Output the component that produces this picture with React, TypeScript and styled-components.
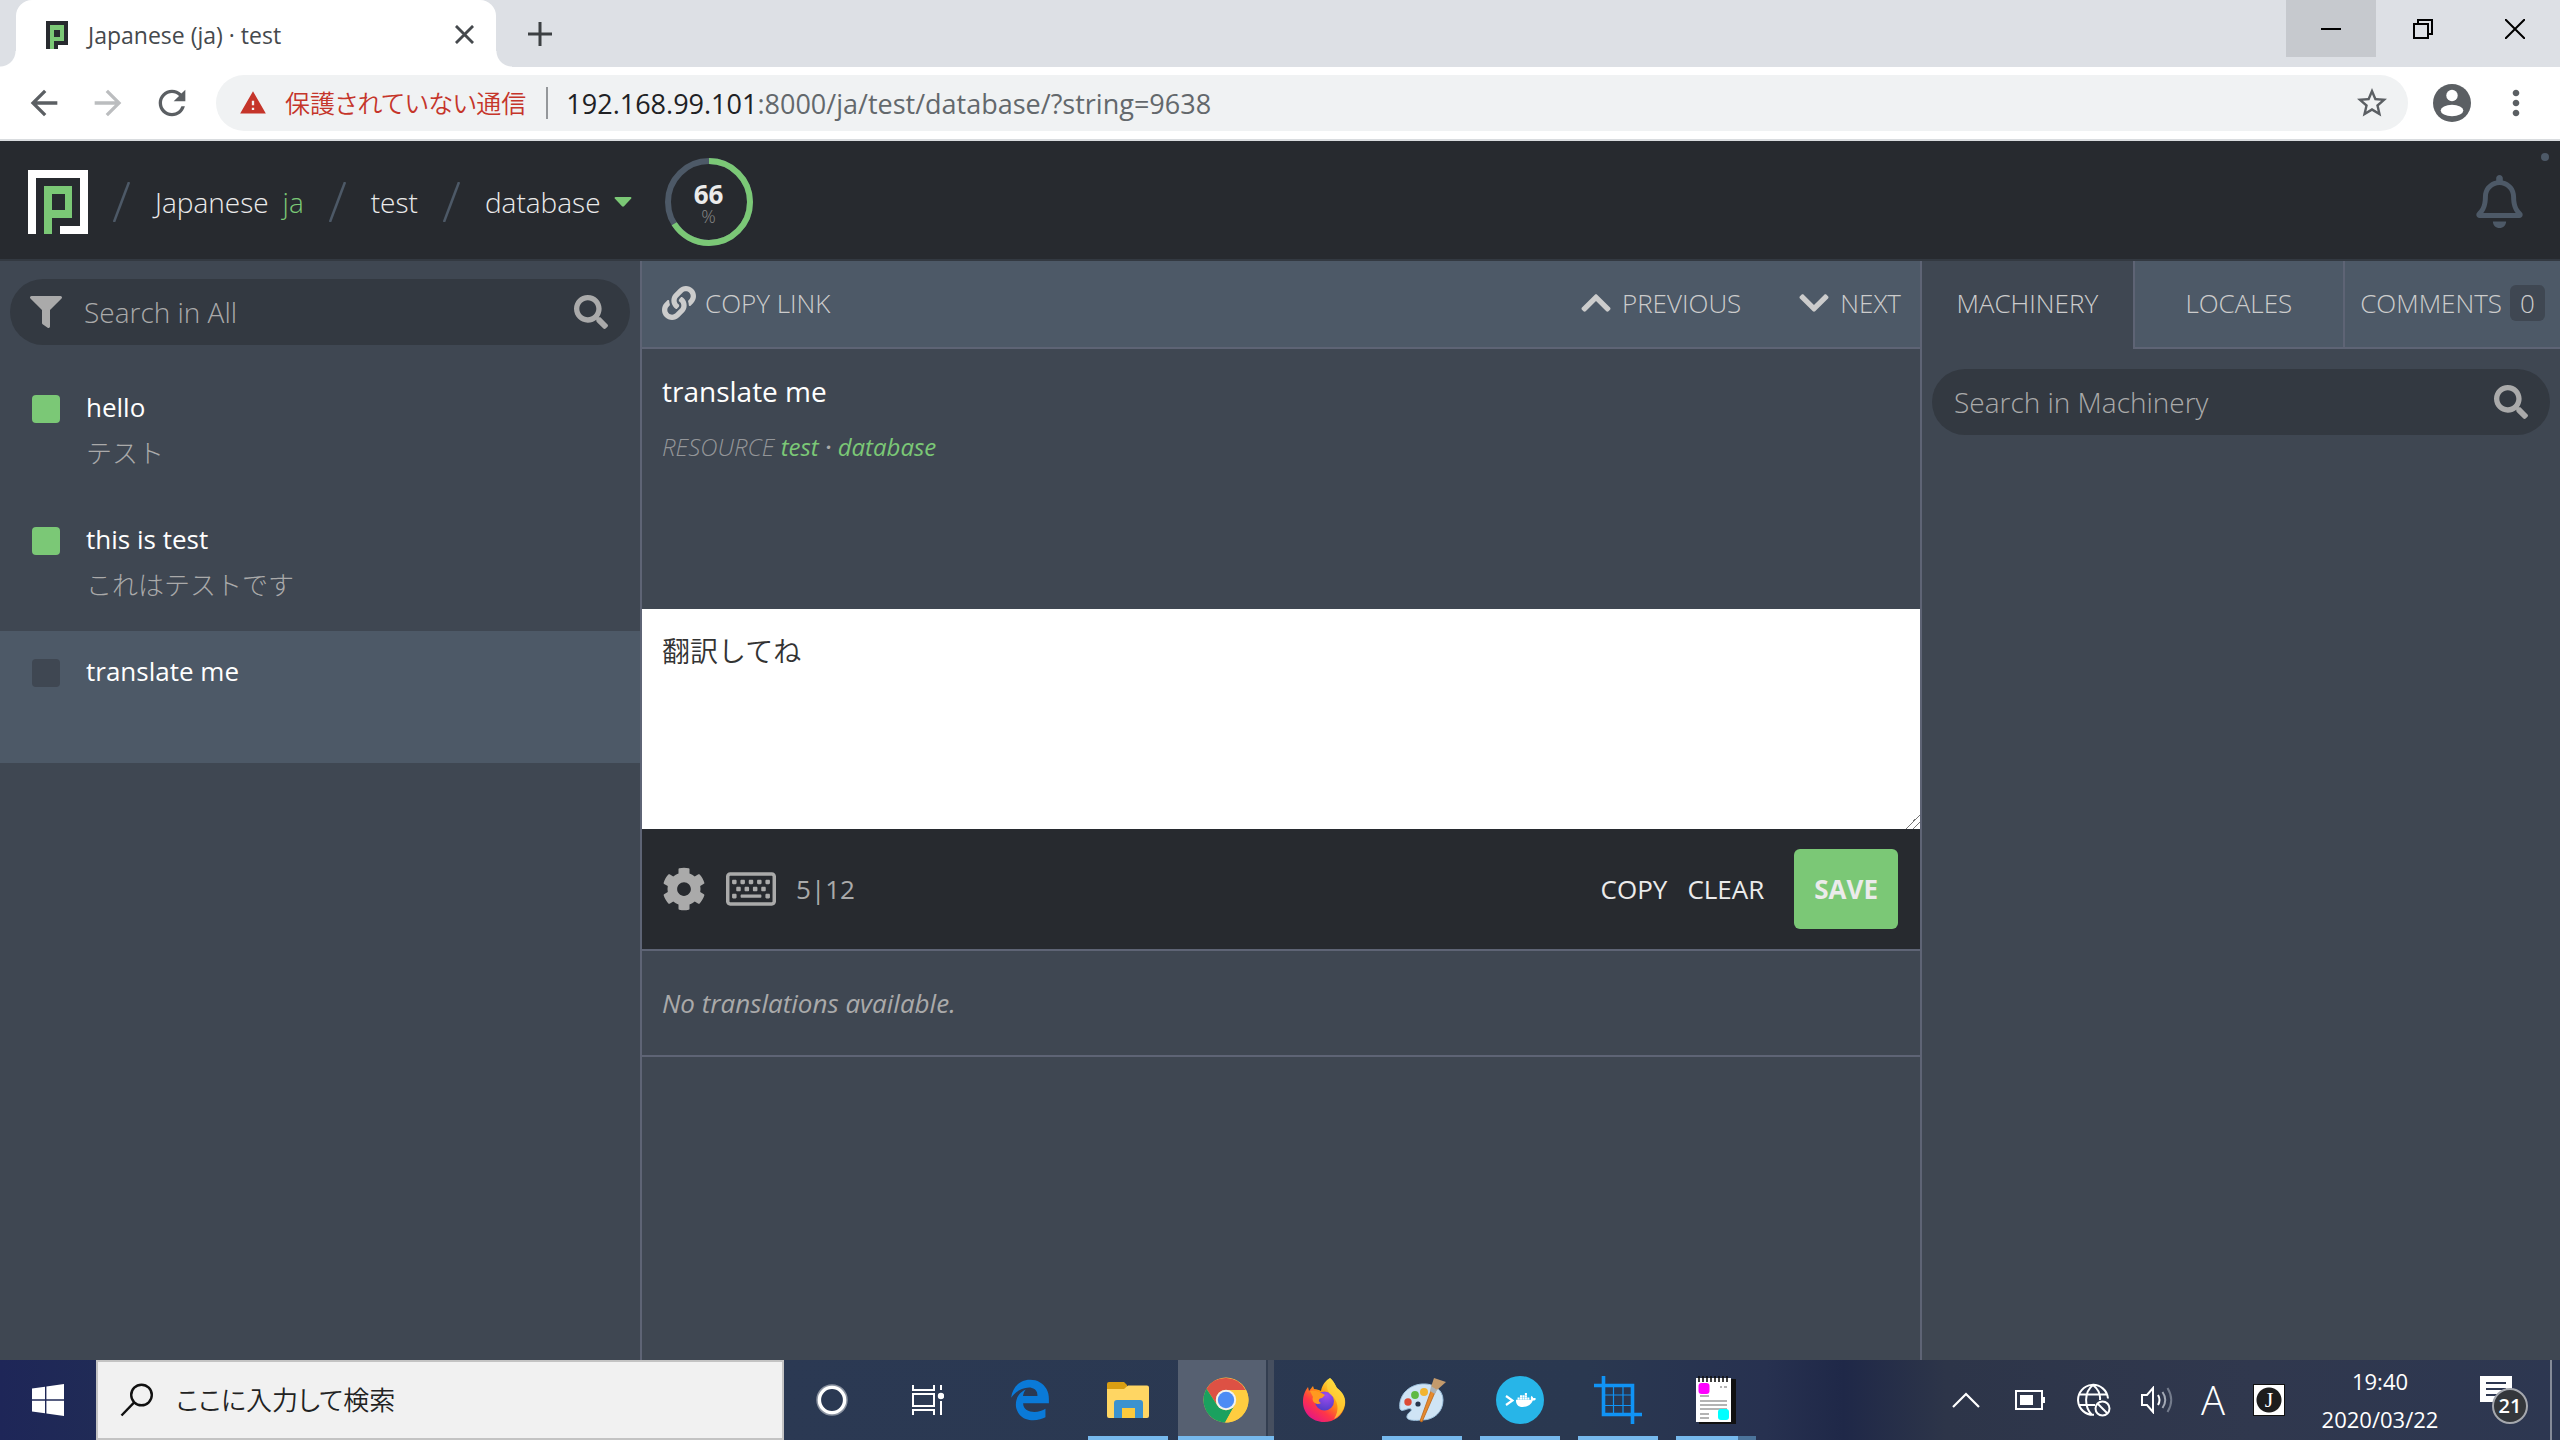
import React, { useState } from "react";
import styled, { createGlobalStyle, css } from "styled-components";
import {
  FaChevronDown,
  FaChevronUp,
  FaCog,
  FaDocker,
  FaFilter,
  FaLink,
  FaRegBell,
  FaRegKeyboard,
  FaSearch,
} from "react-icons/fa";
import { FaEdgeLegacy } from "react-icons/fa6";
import { MdArrowBack, MdArrowForward, MdMoreVert, MdRefresh, MdStarBorder, MdWarning } from "react-icons/md";

const colors = {
  black: "#272a2f",
  field: "#333941",
  base: "#3f4752",
  raised: "#4d5967",
  line: "#5e6475",
  green: "#7bc876",
  grey: "#aaaaaa",
  light: "#cccccc",
  bright: "#ebebeb",
};

const GlobalStyle = createGlobalStyle`
  *, *::before, *::after { box-sizing: border-box; }
  body {
    margin: 0;
    font-family: "Open Sans", "Noto Sans CJK JP", sans-serif;
    font-size: 26px;
    color: ${colors.bright};
    background: ${colors.base};
  }
  button, input, textarea { font: inherit; color: inherit; }
  button { padding: 0; border: 0; background: none; cursor: pointer; }
  a { text-decoration: none; color: inherit; }
  svg { display: block; flex: none; }
  h1, p, ul, nav { margin: 0; padding: 0; font: inherit; }
  ul { list-style: none; }
`;

const Screen = styled.div`
  display: flex;
  flex-direction: column;
  min-height: 100vh;
`;

/* Browser window */

const TabStrip = styled.div`
  display: flex;
  height: 67px;
  padding-left: 16px;
  background: #dde0e5;
`;

const flare = css`
  content: "";
  position: absolute;
  bottom: 0;
  width: 16px;
  height: 16px;
`;

const BrowserTab = styled.div`
  position: relative;
  display: flex;
  align-items: center;
  gap: 20px;
  width: 480px;
  padding: 2px 22px 0 30px;
  border-radius: 16px 16px 0 0;
  background: #fff;
  color: #45494d;
  font-size: 23px;
  &::before { ${flare} left: -16px; background: radial-gradient(circle at 0 0, transparent 15px, #fff 16px); }
  &::after { ${flare} right: -16px; background: radial-gradient(circle at 100% 0, transparent 15px, #fff 16px); }
`;

const TabTitle = styled.span`
  flex: 1;
`;

const NewTab = styled.button`
  display: grid;
  place-items: center;
  width: 48px;
  margin-left: 20px;
`;

const WindowButtons = styled.div`
  display: flex;
  gap: 2px;
  margin-left: auto;
`;

const WindowButton = styled.button<{ $hover?: boolean }>`
  display: grid;
  place-items: center;
  width: 90px;
  height: 57px;
  background: ${(p) => (p.$hover ? "#c6c9ce" : "transparent")};
`;

const AddressRow = styled.div`
  display: flex;
  align-items: center;
  gap: 24px;
  height: 74px;
  padding: 0 24px;
  border-bottom: 2px solid #d9dcdf;
  background: #fff;
`;

const ToolButton = styled.button<{ $dim?: boolean }>`
  display: grid;
  place-items: center;
  width: 40px;
  height: 56px;
  color: ${(p) => (p.$dim ? "#bbbdbf" : "#5b5f63")};
`;

const Omnibox = styled.div`
  display: flex;
  align-items: center;
  flex: 1;
  height: 56px;
  padding: 0 16px 0 23px;
  border-radius: 28px;
  background: #f0f2f3;
  font-size: 27px;
`;

const Insecure = styled.button`
  display: flex;
  align-items: center;
  gap: 18px;
  padding-right: 20px;
  border-right: 2px solid #94979a;
  color: #c5352a;
  font-size: 25px;
  font-weight: 350;
  font-feature-settings: "palt";
  line-height: 32px;
`;

const Url = styled.span`
  flex: 1;
  padding-left: 18px;
  color: #63686c;
`;

const Host = styled.span`
  color: #202124;
`;

/* Page header */

const Header = styled.header`
  position: relative;
  display: flex;
  align-items: center;
  height: 120px;
  padding: 3px 34px 0 28px;
  border-bottom: 2px solid ${colors.field};
  background: ${colors.black};
  font-size: 28px;
  font-weight: 300;
`;

const Crumbs = styled.nav`
  display: flex;
  align-items: center;
  gap: 25px;
`;

const Crumb = styled.a`
  display: flex;
  gap: 14px;
`;

const LocaleCode = styled.span`
  color: ${colors.green};
`;

const ResourceButton = styled.button`
  display: flex;
  align-items: center;
  gap: 13px;
`;

const Progress = styled.div`
  display: grid;
  width: 88px;
  height: 88px;
  margin-left: 33px;
  > * { grid-area: 1 / 1; }
`;

const ProgressText = styled.div`
  display: flex;
  flex-direction: column;
  align-items: center;
  padding-top: 24px;
  font-size: 26px;
  font-weight: 700;
  line-height: 24px;
`;

const Percent = styled.span`
  color: #888;
  font-size: 18px;
  font-weight: 300;
  line-height: 20px;
`;

const BellButton = styled.button`
  margin-left: auto;
  color: ${colors.raised};
`;

const ScrollDot = styled.span`
  position: absolute;
  top: 12px;
  right: 11px;
  width: 8px;
  height: 8px;
  border-radius: 4px;
  background: ${colors.raised};
`;

/* Workspace */

const Workspace = styled.main`
  display: grid;
  grid-template-columns: minmax(0, 1fr) minmax(0, 2fr) minmax(0, 1fr);
  flex: 1;
  background: ${colors.base};
`;

const Column = styled.section<{ $line?: boolean }>`
  display: flex;
  flex-direction: column;
  border-left: ${(p) => (p.$line ? `2px solid ${colors.line}` : "0")};
`;

const SearchBox = styled.label<{ $top: number }>`
  display: flex;
  align-items: center;
  gap: 20px;
  height: 66px;
  margin: ${(p) => p.$top}px 10px 22px;
  padding: 0 22px 0 20px;
  border-radius: 33px;
  background: ${colors.field};
  color: ${colors.grey};
`;

const SearchInput = styled.input`
  flex: 1;
  min-width: 0;
  padding: 0 2px;
  border: 0;
  outline: 0;
  background: none;
  font-size: 28px;
  font-weight: 300;
  &::placeholder { color: ${colors.grey}; opacity: 1; }
`;

const Entity = styled.button<{ $selected?: boolean }>`
  display: flex;
  gap: 26px;
  width: 100%;
  height: 132px;
  padding: 17px 32px 0;
  background: ${(p) => (p.$selected ? colors.raised : "transparent")};
  line-height: 46px;
  text-align: left;
`;

const Status = styled.span<{ $done: boolean }>`
  width: 28px;
  height: 28px;
  margin-top: 11px;
  border-radius: 4px;
  background: ${(p) => (p.$done ? colors.green : colors.base)};
`;

const EntityText = styled.span`
  display: flex;
  flex-direction: column;
  color: #fff;
`;

const EntityTranslation = styled.span`
  color: ${colors.grey};
  font-weight: 300;
`;

const Toolbar = styled.div`
  display: flex;
  align-items: center;
  gap: 56px;
  height: 88px;
  padding: 0 19px 2px 20px;
  border-bottom: 2px solid ${colors.line};
  background: ${colors.raised};
`;

const ToolbarButton = styled.button<{ $push?: boolean }>`
  display: flex;
  align-items: center;
  gap: 9px;
  margin-right: ${(p) => (p.$push ? "auto" : "0")};
  color: ${colors.light};
  font-weight: 300;
`;

const Source = styled.div`
  min-height: 260px;
  padding: 19px 20px;
`;

const Original = styled.h1`
  color: #fff;
  font-size: 28px;
  line-height: 46px;
`;

const Context = styled.p`
  padding-top: 15px;
  color: #949699;
  font-size: 24px;
  font-style: italic;
  font-weight: 300;
  line-height: 36px;
`;

const ContextLink = styled.a`
  color: ${colors.green};
  font-weight: 400;
`;

const Separator = styled.span`
  color: ${colors.grey};
  font-weight: 600;
`;

const Translation = styled.textarea`
  display: block;
  width: 100%;
  height: 220px;
  padding: 20px;
  border: 0;
  outline: 0;
  background: #fff;
  color: #333;
  font-size: 28px;
  font-weight: 350;
  line-height: 44px;
  resize: vertical;
  &::-webkit-scrollbar { width: 18px; height: 18px; }
  &::-webkit-resizer {
    background: linear-gradient(135deg, #fff 50%, #777 50%, #777 54%, #fff 54%, #fff 75%, #777 75%, #777 79%, #fff 79%);
  }
`;

const EditorBar = styled.div`
  display: flex;
  align-items: center;
  gap: 20px;
  height: 120px;
  padding: 0 22px 0 20px;
  background: ${colors.black};
`;

const IconButton = styled.button`
  color: ${colors.grey};
`;

const Counter = styled.span`
  flex: 1;
  color: ${colors.grey};
`;

const Save = styled.button`
  height: 80px;
  margin-left: 10px;
  padding: 0 20px;
  border-radius: 6px;
  background: ${colors.green};
  font-weight: 700;
`;

const History = styled.p`
  padding: 31px 20px;
  border: solid ${colors.line};
  border-width: 2px 0;
  color: ${colors.grey};
  font-style: italic;
  line-height: 42px;
`;

const Tabs = styled.div`
  display: grid;
  grid-template-columns: 33fr 33fr 34fr;
  height: 88px;
`;

const Tab = styled.button<{ $active?: boolean }>`
  display: flex;
  align-items: center;
  justify-content: center;
  gap: 8px;
  padding-bottom: 2px;
  border-left: ${(p) => (p.$active ? "0" : `2px solid ${colors.line}`)};
  border-bottom: 2px solid ${(p) => (p.$active ? "transparent" : colors.line)};
  background: ${(p) => (p.$active ? "transparent" : colors.raised)};
  color: ${colors.light};
  font-weight: 300;
`;

const Count = styled.span`
  padding: 0 10px;
  border-radius: 6px;
  background: ${colors.base};
  line-height: 36px;
`;

/* Taskbar */

const Taskbar = styled.footer`
  display: flex;
  height: 80px;
  background: linear-gradient(90deg, #1e2658 0, #202b56 4%, #2b3953 30%, #2a3850 62%, #273150 69%, #1f2848 72%, #2d3549 76%, #30384e 88%, #2d3751 100%);
  color: #fff;
`;

const StartButton = styled.button`
  display: grid;
  place-items: center;
  width: 96px;
`;

const TaskSearch = styled.label`
  display: flex;
  align-items: center;
  gap: 20px;
  width: 688px;
  padding-left: 22px;
  border: 2px solid #c3c3c3;
  background: #f1f1f1;
  color: #111;
`;

const TaskSearchInput = styled.input`
  flex: 1;
  border: 0;
  outline: 0;
  background: none;
  font-feature-settings: "palt";
  font-weight: 350;
  &::placeholder { color: #222; opacity: 1; }
`;

const ShellButtons = styled.div`
  display: flex;
  margin-right: 6px;
`;

const Apps = styled.div`
  display: flex;
  gap: 2px;
`;

const TaskButton = styled.button<{ $run?: boolean; $active?: boolean; $stack?: boolean }>`
  position: relative;
  display: grid;
  place-items: center;
  width: 96px;
  background: ${(p) => (p.$active ? "linear-gradient(90deg, #566071 88px, #333e50 88px, #333e50 90px, #464f5f 90px)" : "none")};
  &::after {
    content: "";
    position: absolute;
    bottom: 0;
    left: ${(p) => (p.$active ? "0" : "8px")};
    right: ${(p) => (p.$active ? "0" : "8px")};
    height: 4px;
    background: ${(p) =>
      p.$stack
        ? "linear-gradient(90deg, #76b9ed 62px, #4c749b 62px)"
        : p.$run || p.$active
          ? "#76b9ed"
          : "none"};
  }
`;

const Tray = styled.div`
  display: flex;
  margin-left: auto;
`;

const TrayButton = styled.button<{ $w: number }>`
  display: grid;
  place-items: center;
  width: ${(p) => p.$w}px;
`;

const ImeMode = styled.span`
  font-size: 40px;
  font-weight: 300;
  line-height: 48px;
`;

const ImeBadge = styled.span`
  display: grid;
  place-items: center;
  width: 32px;
  height: 32px;
  border: 1px solid #111;
  background: radial-gradient(circle, #1d1d1d 12px, #fff 13px);
  font: 22px/28px "Liberation Serif", serif;
`;

const Clock = styled.time`
  display: flex;
  flex-direction: column;
  justify-content: center;
  width: 156px;
  font-size: 22px;
  line-height: 38px;
  text-align: center;
`;

const NoticeButton = styled.button`
  display: grid;
  place-items: center;
  width: 92px;
`;

const NoticeIcon = styled.span`
  position: relative;
  display: block;
  width: 48px;
  height: 48px;
`;

const NoticeCount = styled.span`
  position: absolute;
  right: 0;
  bottom: 0;
  width: 36px;
  height: 36px;
  border: 2px solid #a5a8ae;
  border-radius: 18px;
  background: #34373b;
  font-size: 20px;
  font-weight: 600;
  line-height: 31px;
`;

const ShowDesktop = styled.button`
  width: 10px;
  border-left: 2px solid #858b98;
`;

/* Drawings */

const Favicon = () => (
  <svg width="22" height="28" viewBox="0 0 22 28">
    <path d="M0 0H22V24H12V28H0Z" fill="#272a2f" />
    <path fillRule="evenodd" d="M4 4H18V20H8V28H4ZM8 9V16H14V9Z" fill="#7bc876" />
  </svg>
);

const Logo = () => (
  <svg width="60" height="64" viewBox="0 0 60 64">
    <path d="M0 0H60V64H32V56H52V8H8V64H0Z" fill="#fff" />
    <path fillRule="evenodd" d="M16 16H44V48H24V64H16ZM24 24V40H37V24Z" fill="#7bc876" />
  </svg>
);

const Slash = () => (
  <svg width="17" height="40" viewBox="0 0 17 40">
    <path d="M1 40L16 0" stroke="#4d5967" strokeWidth="2.5" />
  </svg>
);

const Caret = () => (
  <svg width="18" height="10" viewBox="0 0 18 10">
    <path d="M1.5 0H16.5Q18 0.4 17.2 1.6L10 9.3Q9 10 8 9.3L0.8 1.6Q0 0.4 1.5 0Z" fill="#7bc876" />
  </svg>
);

const Ring = ({ value }: { value: number }) => {
  const length = 2 * Math.PI * 41;
  return (
    <svg width="88" height="88" viewBox="0 0 88 88" fill="none" strokeWidth="6">
      <circle cx="44" cy="44" r="41" stroke="#4d5967" />
      <circle
        cx="44"
        cy="44"
        r="41"
        stroke="#7bc876"
        strokeDasharray={`${(length * value) / 100} ${length}`}
        transform="rotate(-90 44 44)"
      />
    </svg>
  );
};

const Cross = ({ size, weight }: { size: number; weight: number }) => (
  <svg width={size} height={size} viewBox="0 0 20 20" stroke="currentColor" strokeWidth={weight}>
    <path d="M1 1L19 19M19 1L1 19" />
  </svg>
);

const Profile = () => (
  <svg width="38" height="38" viewBox="0 0 38 38">
    <circle cx="19" cy="19" r="19" fill="#5b5f63" />
    <circle cx="19" cy="11.5" r="5.7" fill="#fff" />
    <ellipse cx="19" cy="26.5" rx="11.3" ry="5.7" fill="#fff" />
  </svg>
);

const WindowsLogo = () => (
  <svg width="32" height="32" viewBox="0 0 32 32" fill="#fff">
    <path d="M0 4.6L13 2.8V15.3H0ZM14.4 2.6L32 0V15.3H14.4ZM0 16.7H13V29.2L0 27.4ZM14.4 16.7H32V32L14.4 29.4Z" />
  </svg>
);

const Lens = () => (
  <svg width="34" height="34" viewBox="0 0 34 34" fill="none" stroke="#111" strokeWidth="2.4">
    <circle cx="21.5" cy="12" r="10.3" />
    <path d="M14.2 19.3L1.5 32.5" />
  </svg>
);

const Cortana = () => (
  <svg width="32" height="32" viewBox="0 0 32 32" fill="none">
    <circle cx="16" cy="16" r="14.5" stroke="#8b93a1" strokeWidth="2.5" />
    <circle cx="16" cy="16" r="12.6" stroke="#fff" strokeWidth="3.4" />
  </svg>
);

const TaskView = () => (
  <svg width="32" height="32" viewBox="0 0 32 32" fill="none" stroke="#fff" strokeWidth="2">
    <path d="M1 1V6H22V1M1 31V26H22V31M1 10H22V22H1ZM29 1V6M29 17V31" />
    <circle cx="29" cy="12" r="3.2" fill="#fff" stroke="none" />
  </svg>
);

const Explorer = () => (
  <svg width="42" height="36" viewBox="0 0 42 36">
    <path d="M0 2Q0 0 2 0H17L20 3V8H0Z" fill="#d99e12" />
    <path d="M0 7H17L21 3.5H40Q42 3.5 42 5.5V34Q42 36 40 36H2Q0 36 0 34Z" fill="#ffd663" />
    <path d="M7 36V21Q7 18 10 18H33Q36 18 36 21V36H28V26H15V36Z" fill="#3b92cf" />
    <path d="M15 36V26H28V36Z" fill="#fbc93c" />
  </svg>
);

const Chrome = () => (
  <svg width="46" height="46" viewBox="0 0 46 46">
    <circle cx="23" cy="23" r="22.5" fill="#ffcd40" />
    <path d="M3.5 11.8A22.5 22.5 0 0 1 42.5 12.9H23A10.2 10.2 0 0 0 14.2 28.2Z" fill="#dd5144" />
    <path d="M3.5 11.8L14.2 28.2A10.2 10.2 0 0 0 31.8 28.1L22.1 45.5A22.5 22.5 0 0 1 3.5 11.8Z" fill="#1aa15f" />
    <path d="M31.8 28.1A10.2 10.2 0 0 0 28 12.9H43.1A22.5 22.5 0 0 1 22.1 45.5Z" fill="#ffcd40" />
    <circle cx="23" cy="23" r="10.2" fill="#f1f1f1" />
    <circle cx="23" cy="23" r="8.2" fill="#4c8bf5" />
  </svg>
);

const Firefox = () => (
  <svg width="44" height="46" viewBox="0 0 44 46">
    <defs>
      <linearGradient id="fox" x1="0.85" y1="0.1" x2="0.2" y2="0.95">
        <stop offset="0" stopColor="#fff44f" />
        <stop offset="0.4" stopColor="#ff980e" />
        <stop offset="0.7" stopColor="#ff3647" />
        <stop offset="1" stopColor="#e31587" />
      </linearGradient>
      <radialGradient id="globe" cx="0.6" cy="0.2" r="0.9">
        <stop offset="0" stopColor="#a04cf0" />
        <stop offset="1" stopColor="#4b3bc4" />
      </radialGradient>
    </defs>
    <path
      d="M28 1C32 4 33 8 35 11C42 16 44 22 43 28C41 39 32 45 22 45C10 45 1 36 1 25C1 18 3 14 6 10L7 14L11 9L12 12C15 12 17 13 19 14C20 8 24 3 28 1Z"
      fill="url(#fox)"
    />
    <circle cx="22.5" cy="24" r="9.5" fill="url(#globe)" />
    <path d="M8 14C14 13 18 15 23 18L20 21C16 21 16 25 19 26C14 29 9 24 11 20Z" fill="#ff9a1f" />
    <path d="M28 1C32 4 33 8 35 11C40 15 43 20 43 26C42 33 38 39 32 42C38 33 36 23 29 18C24 14 24 6 28 1Z" fill="#ffd43a" opacity="0.75" />
  </svg>
);

const Paint = () => (
  <svg width="48" height="48" viewBox="0 0 48 48">
    <path
      d="M24 8C36 7 45 14 45 24C45 36 36 44 24 44C14 45 8 44 9 40C10 36 15 35 13 33C10 31 4 37 2 33C0 20 10 9 24 8Z"
      fill="#cfe4f5"
      stroke="#9fc3df"
    />
    <circle cx="20" cy="28" r="2.6" fill="#27364d" />
    <circle cx="10" cy="26" r="3.7" fill="#dc4a35" />
    <circle cx="17" cy="19" r="3.9" fill="#5fb944" />
    <circle cx="26" cy="16" r="4" fill="#f2b430" />
    <path d="M38 14L24 46L22 45L34 12Z" fill="#e68a2e" stroke="#b8641a" strokeWidth="0.8" />
    <path d="M33 11L36 2L48 6L39 14Z" fill="#c39a6c" />
    <path d="M33 10L39 14L37 18L32 15Z" fill="#aab2b8" />
  </svg>
);

const DockerDisc = styled.span`
  display: flex;
  align-items: center;
  justify-content: center;
  gap: 2px;
  width: 48px;
  height: 48px;
  border-radius: 24px;
  background: #27b5e8;
`;

const Prompt = () => (
  <svg width="9" height="11" viewBox="0 0 9 11" fill="none" stroke="#fff" strokeWidth="2.2">
    <path d="M1 1L7.5 5.5L1 10" />
  </svg>
);

const Snip = () => (
  <svg width="48" height="48" viewBox="0 0 48 48" fill="none" stroke="#1093f5">
    <path d="M0 9.5H38.5V48M9.5 0V38.5H48" strokeWidth="3.6" />
    <path d="M19.5 11V37M29 11V37M11 19H37M11 29.5H37" strokeWidth="1.2" />
  </svg>
);

const Notepad = () => (
  <svg width="40" height="48" viewBox="0 0 40 48">
    <path d="M3 3H40V48H3Z" fill="#111" />
    <path d="M0 2H35V46H0Z" fill="#fff" />
    <path d="M3 0V6M7 0V6M11 0V6M15 0V6M19 0V6M23 0V6M27 0V6M31 0V6" stroke="#111" strokeWidth="1.6" />
    <path d="M4 20H13M4 25H31M4 29H31M4 33H31M4 38H13M4 42H13M24 11H26M28 11H31" stroke="#9a9a9a" strokeWidth="1.4" />
    <rect x="2.5" y="7" width="11" height="11" rx="3" fill="#f0f" />
    <rect x="22" y="33" width="11" height="11" rx="3" fill="#0ff" />
  </svg>
);

const Up = () => (
  <svg width="28" height="16" viewBox="0 0 28 16" fill="none" stroke="#fff" strokeWidth="2.2">
    <path d="M1 15L14 2L27 15" />
  </svg>
);

const Battery = () => (
  <svg width="30" height="20" viewBox="0 0 30 20" fill="none" stroke="#fff" strokeWidth="2">
    <path d="M1 1H27V19H1Z" />
    <path d="M5 5H18V15H5ZM27.5 7H30V13H27.5Z" fill="#fff" stroke="none" />
  </svg>
);

const GlobeOff = () => (
  <svg width="34" height="34" viewBox="0 0 34 34" fill="none" stroke="#fff" strokeWidth="2">
    <path d="M17 31.8A15 15 0 1 1 31 15.5M1.5 11.5H30.5M1.5 22H18M15 32C7 24 7 9 16 2C21 6 23.5 12 23 17" />
    <circle cx="25.5" cy="25.5" r="7" />
    <path d="M20.5 20.5L30.5 30.5" />
  </svg>
);

const Speaker = () => (
  <svg width="34" height="28" viewBox="0 0 34 28" fill="none" stroke="#fff" strokeWidth="2">
    <path d="M1 9H6L12 2V26L6 19H1Z" />
    <path d="M17 9Q20 14 17 19" />
    <path d="M21.5 6Q27 14 21.5 22" stroke="#a3a9b5" />
    <path d="M26.5 2Q34 14 26.5 26" stroke="#747c8c" />
  </svg>
);

const NoticeSheet = () => (
  <svg width="32" height="34" viewBox="0 0 32 34">
    <path d="M0 0H32V26H20L13 33V26H0Z" fill="#fff" />
    <path d="M6 7H26M6 13H26M6 19H18" stroke="#2d3751" strokeWidth="2" />
  </svg>
);

const entities = [
  { source: "hello", target: "テスト" },
  { source: "this is test", target: "これはテストです" },
  { source: "translate me", target: "" },
];

export default function App() {
  const [text, setText] = useState("翻訳してね");

  return (
    <Screen>
      <GlobalStyle />
      <TabStrip>
        <BrowserTab>
          <Favicon />
          <TabTitle>Japanese (ja) · test</TabTitle>
          <button aria-label="Close tab"><Cross size={19} weight={3} /></button>
        </BrowserTab>
        <NewTab aria-label="New tab">
          <svg width="24" height="24" viewBox="0 0 24 24" stroke="#3c4043" strokeWidth="3">
            <path d="M12 0V24M0 12H24" />
          </svg>
        </NewTab>
        <WindowButtons>
          <WindowButton $hover aria-label="Minimize">
            <svg width="20" height="20" viewBox="0 0 20 20" stroke="#000" strokeWidth="2"><path d="M0 10H20" /></svg>
          </WindowButton>
          <WindowButton aria-label="Restore">
            <svg width="20" height="20" viewBox="0 0 20 20" fill="none" stroke="#000" strokeWidth="2">
              <path d="M1 5H15V19H1ZM5 5V1H19V15H15" />
            </svg>
          </WindowButton>
          <WindowButton aria-label="Close">
            <svg width="20" height="20" viewBox="0 0 20 20" stroke="#000" strokeWidth="2"><path d="M0 0L20 20M20 0L0 20" /></svg>
          </WindowButton>
        </WindowButtons>
      </TabStrip>

      <AddressRow>
        <ToolButton aria-label="Back"><MdArrowBack size={40} /></ToolButton>
        <ToolButton $dim aria-label="Forward"><MdArrowForward size={40} /></ToolButton>
        <ToolButton aria-label="Reload"><MdRefresh size={40} /></ToolButton>
        <Omnibox>
          <Insecure>
            <MdWarning size={28} />
            保護されていない通信
          </Insecure>
          <Url><Host>192.168.99.101</Host>:8000/ja/test/database/?string=9638</Url>
          <ToolButton aria-label="Bookmark"><MdStarBorder size={36} /></ToolButton>
        </Omnibox>
        <ToolButton aria-label="Profile"><Profile /></ToolButton>
        <ToolButton aria-label="Menu"><MdMoreVert size={40} /></ToolButton>
      </AddressRow>

      <Header>
        <Crumbs>
          <a href="#home" aria-label="Home"><Logo /></a>
          <Slash />
          <Crumb href="#ja"><span>Japanese</span><LocaleCode>ja</LocaleCode></Crumb>
          <Slash />
          <Crumb href="#test">test</Crumb>
          <Slash />
          <ResourceButton>database <Caret /></ResourceButton>
        </Crumbs>
        <Progress>
          <Ring value={66} />
          <ProgressText>66<Percent>%</Percent></ProgressText>
        </Progress>
        <BellButton aria-label="Notifications"><FaRegBell size={53} /></BellButton>
        <ScrollDot />
      </Header>

      <Workspace>
        <Column>
          <SearchBox $top={18}>
            <FaFilter size={32} />
            <SearchInput aria-label="Search in All" placeholder="Search in All" />
            <FaSearch size={34} />
          </SearchBox>
          <ul>
            {entities.map((e) => (
              <li key={e.source}>
                <Entity $selected={!e.target}>
                  <Status $done={!!e.target} />
                  <EntityText>
                    {e.source}
                    <EntityTranslation>{e.target}</EntityTranslation>
                  </EntityText>
                </Entity>
              </li>
            ))}
          </ul>
        </Column>

        <Column $line>
          <Toolbar>
            <ToolbarButton $push><FaLink size={34} />COPY LINK</ToolbarButton>
            <ToolbarButton><FaChevronUp size={34} />PREVIOUS</ToolbarButton>
            <ToolbarButton><FaChevronDown size={34} />NEXT</ToolbarButton>
          </Toolbar>
          <Source>
            <Original>translate me</Original>
            <Context>
              RESOURCE <ContextLink href="#test">test</ContextLink> <Separator>·</Separator>{" "}
              <ContextLink href="#database">database</ContextLink>
            </Context>
          </Source>
          <Translation
            aria-label="Translation"
            value={text}
            spellCheck={false}
            onChange={(e) => setText(e.target.value)}
          />
          <EditorBar>
            <IconButton aria-label="Settings"><FaCog size={44} /></IconButton>
            <IconButton aria-label="Keyboard shortcuts"><FaRegKeyboard size={50} /></IconButton>
            <Counter>{text.length}|12</Counter>
            <button>COPY</button>
            <button>CLEAR</button>
            <Save>SAVE</Save>
          </EditorBar>
          <History>No translations available.</History>
        </Column>

        <Column $line>
          <Tabs>
            <Tab $active>MACHINERY</Tab>
            <Tab>LOCALES</Tab>
            <Tab>COMMENTS<Count>0</Count></Tab>
          </Tabs>
          <SearchBox $top={20}>
            <SearchInput aria-label="Search in Machinery" placeholder="Search in Machinery" />
            <FaSearch size={34} />
          </SearchBox>
        </Column>
      </Workspace>

      <Taskbar>
        <StartButton aria-label="Start"><WindowsLogo /></StartButton>
        <TaskSearch>
          <Lens />
          <TaskSearchInput aria-label="ここに入力して検索" placeholder="ここに入力して検索" />
        </TaskSearch>
        <ShellButtons>
          <TaskButton aria-label="Cortana"><Cortana /></TaskButton>
          <TaskButton aria-label="Task view"><TaskView /></TaskButton>
        </ShellButtons>
        <Apps>
          <TaskButton aria-label="Edge"><FaEdgeLegacy size={42} color="#0a7ad8" /></TaskButton>
          <TaskButton $run aria-label="Explorer"><Explorer /></TaskButton>
          <TaskButton $active aria-label="Chrome"><Chrome /></TaskButton>
          <TaskButton aria-label="Firefox"><Firefox /></TaskButton>
          <TaskButton $run aria-label="Paint"><Paint /></TaskButton>
          <TaskButton $run aria-label="Docker">
            <DockerDisc><Prompt /><FaDocker size={20} /></DockerDisc>
          </TaskButton>
          <TaskButton $run aria-label="Snipping tool"><Snip /></TaskButton>
          <TaskButton $stack aria-label="Notes"><Notepad /></TaskButton>
        </Apps>
        <Tray>
          <TrayButton $w={64} aria-label="Hidden icons"><Up /></TrayButton>
          <TrayButton $w={64} aria-label="Battery"><Battery /></TrayButton>
          <TrayButton $w={64} aria-label="Network"><GlobeOff /></TrayButton>
          <TrayButton $w={64} aria-label="Volume"><Speaker /></TrayButton>
          <TrayButton $w={46}><ImeMode>A</ImeMode></TrayButton>
          <TrayButton $w={66}><ImeBadge>J</ImeBadge></TrayButton>
          <Clock><span>19:40</span><span>2020/03/22</span></Clock>
          <NoticeButton>
            <NoticeIcon><NoticeSheet /><NoticeCount>21</NoticeCount></NoticeIcon>
          </NoticeButton>
          <ShowDesktop aria-label="Show desktop" />
        </Tray>
      </Taskbar>
    </Screen>
  );
}
